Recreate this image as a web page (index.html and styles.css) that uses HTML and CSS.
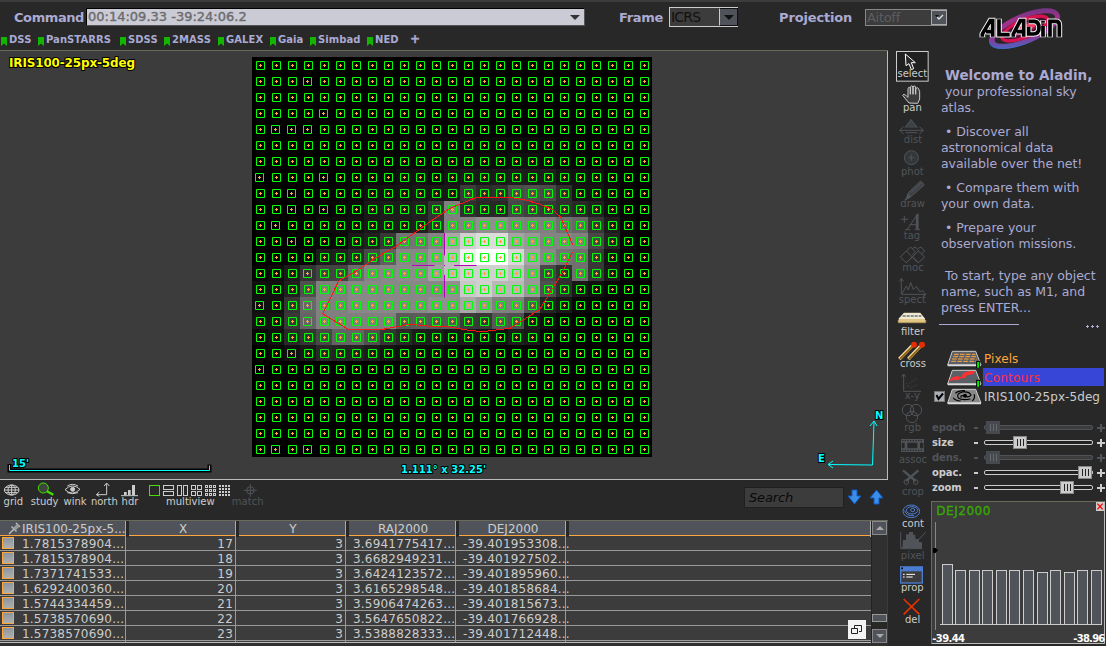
FILE: index.html
```html
<!DOCTYPE html>
<html lang="en">
<head>
<meta charset="utf-8">
<title>Aladin</title>
<link rel="stylesheet" href="styles.css">
</head>
<body>
<header class="top">
  <div class="bars">
    <div class="controls">
      <label class="lbl command-lbl">Command</label>
      <div class="command"><span>00:14:09.33 -39:24:06.2</span><i class="tri"></i></div>
      <label class="lbl frame-lbl">Frame</label>
      <div class="combo frame"><span>ICRS</span><b><i class="tri"></i></b></div>
      <label class="lbl proj-lbl">Projection</label>
      <div class="combo proj"><span>Aitoff</span><b><svg width="9" height="8" viewBox="0 0 9 8"><path d="M0 2h4L2 5z" fill="#111"/><path d="M2 4l2 2L8 2" fill="none" stroke="#e0e0e4" stroke-width="1.300"/></svg></b></div>
    </div>
    <nav class="marks" id="marks"></nav>
  </div>
  <svg class="logo" viewBox="720 15 270 135">
    <defs><linearGradient id="lg" x1="0" y1="1" x2="1" y2="0"><stop offset="0" stop-color="#2a7bd0"/><stop offset=".3" stop-color="#8a3a9c"/><stop offset=".7" stop-color="#a03088"/><stop offset="1" stop-color="#5a3a88"/></linearGradient></defs>
    <g transform="rotate(-23 865 85)" fill="none">
      <ellipse cx="864" cy="87" rx="111" ry="41" stroke="#2670bd" stroke-width="5"/>
      <ellipse cx="866" cy="86" rx="105" ry="37" stroke="url(#lg)" stroke-width="15"/>
      <ellipse cx="866" cy="86" rx="74" ry="25" fill="#401030" stroke="#d8124e" stroke-width="10"/>
      <ellipse cx="866" cy="86" rx="42" ry="13" fill="#f43b64" stroke="#8c1a58" stroke-width="5"/>
    </g>
    <g stroke="#f2f2f2" stroke-linejoin="miter" stroke-linecap="butt" fill="none">
      <path stroke-width="17" d="M739 112V102L763 62H770V112M750 95H770M789 56V104H823M832 112V102L853 62H863V112M842 95H863M878 64H896Q909 66 909 84Q909 102 892 102H878V80M921 112V78M921 70V61M942 112V64H960Q970 64 970 75V112"/>
      <path d="M739 110V102L763 62H770V110M750 95H770M789 58V104H821M832 110V102L853 62H863V110M842 95H863M878 64H896Q909 66 909 84Q909 102 892 102H878V80M921 110V78M921 68V62M942 110V64H960Q970 64 970 75V110" stroke="#000" stroke-width="11"/>
    </g>
  </svg>
</header>
<main class="main">
  <section class="left">
    <svg class="view" id="view" viewBox="0 50 888 430" width="888" height="430"></svg>
    <div class="tools">
      <svg width="28" height="40" viewBox="0 90 84 120"><g class="ln lt"><ellipse cx="35" cy="120" rx="22" ry="15"/><ellipse cx="35" cy="120" rx="11" ry="15"/><path d="M35 105V135M13 120H57M17 112H53M17 128H53"/></g><text x="40" y="165">grid</text></svg>
      <svg width="34" height="40" viewBox="84 90 102 120"><circle cx="130" cy="114" r="15" fill="#3c463c" stroke="#44e000" stroke-width="3"/><path d="M141 124l19 10" stroke="#44e000" stroke-width="7"/><text x="134" y="165">study</text></svg>
      <svg width="27" height="40" viewBox="186 90 81 120"><g class="ln lt"><path d="M195 119Q217 97 240 118Q217 140 195 119M202 108Q217 98 234 108M202 128Q218 134 234 128"/><circle cx="218" cy="118" r="6" fill="#ccc"/></g><text x="225" y="165">wink</text></svg>
      <svg width="31" height="40" viewBox="267 90 93 120"><g class="ln lt"><path d="M290 134H320V101M312 108L320 99L328 108M298 126L289 134L298 139"/></g><text x="313" y="165">north</text></svg>
      <svg width="22" height="40" viewBox="360 90 66 120"><path d="M363 137H414" class="ln lt"/><path d="M372 135v-9h8v9zM384 135v-15h8v15zM396 135v-28h8v28z" class="sol"/><rect x="396" y="105" width="9" height="31" class="sol"/><text x="390" y="165">hdr</text></svg>
      <svg width="90" height="40" viewBox="426 90 270 120" id="multi"><rect x="448.500" y="106.500" width="30" height="30" fill="none" stroke="#44e000" stroke-width="3"/><text x="571" y="165">multiview</text></svg>
      <svg width="36" height="40" viewBox="696 90 108 120"><g class="ln dm"><circle cx="751" cy="121" r="11"/><path d="M751 102V140M732 121H770"/></g><text x="743" y="165" class="dim">match</text></svg>
      <div class="search">Search</div>
      <svg class="arrows" width="36" height="20" viewBox="0 0 36 20"><path d="M5 3h5v6h4l-6.500 8L1 9h4zM27 17h5v-6h4l-6.500-8L23 11h4z" fill="#3a8ee8" stroke="#1259c0"/></svg>
    </div>
    <div class="table">
      <div class="grid" id="grid"></div>
      <div class="scroll"><b><i class="up"></i></b><u></u><em></em><b><i class="down"></i></b></div>
      <div class="detach"><svg width="17" height="17" viewBox="0 0 17 17" fill="none" stroke="#222"><path d="M6.500 7V4.500h7v6H11M3.500 7.500h6v5h-6z"/></svg></div>
    </div>
  </section>
  <aside class="toolcol" id="toolcol"></aside>
  <aside class="right">
    <div class="welcome">
      <p><b>Welcome to Aladin,</b><br>&nbsp;your professional sky<br>atlas.</p>
      <p>&nbsp;• Discover all<br>astronomical data<br>available over the net!</p>
      <p>&nbsp;• Compare them with<br>your own data.</p>
      <p>&nbsp;• Prepare your<br>observation missions.</p>
      <p class="last">&nbsp;To start, type any object<br>name, such as M1, and<br>press ENTER...</p>
    </div>
    <div class="split"><hr><span></span><span></span><span></span></div>
    <div class="layers">
      <div class="layer"><i class="chk none"></i><svg width="36" height="19" viewBox="62 102 108 57"><path d="M81 109H151L167 150H67Z" fill="#5c6066" stroke="#ccc" stroke-width="3"/><path d="M67 151H167" stroke="#ddd" stroke-width="5"/><path d="M86 118H150M84 125H152M80 132H154M78 139H156" stroke="#ffa63d" stroke-width="3" stroke-dasharray="14 4"/><rect x="154" y="139" width="9" height="21" fill="#00ee00" stroke="#000" stroke-width="3"/></svg><span class="orange">Pixels</span></div>
      <div class="layer"><i class="chk none"></i><svg width="36" height="19" viewBox="62 159 108 57"><path d="M81 166H151L167 207H67Z" fill="#5c6066" stroke="#ccc" stroke-width="3"/><path d="M67 208H167" stroke="#ddd" stroke-width="5"/><path d="M68 199L82 187L96 183L108 187L114 174L132 168H148L146 177L125 181L118 190H105L98 195H84Z" fill="#ff3030"/><rect x="154" y="196" width="9" height="21" fill="#00ee00" stroke="#000" stroke-width="3"/></svg><span class="red sel">Contours</span></div>
      <div class="layer"><i class="chk"><svg width="9" height="9" viewBox="0 0 9 9"><path d="M1.500 3L3.500 7L8 1.500" stroke="#000" stroke-width="2" fill="none"/></svg></i><svg width="36" height="19" viewBox="62 216 108 57"><path d="M81 223H151L167 264H67Z" fill="#888" stroke="#ccc" stroke-width="3"/><path d="M67 265H167" stroke="#ddd" stroke-width="5"/><g fill="none" stroke="#000" stroke-width="3.500"><path d="M118 243Q132 249 137 240Q132 229 112 231Q91 236 99 249Q110 257 135 252M118 243Q103 239 108 248M90 235Q100 226 119 227M84 248Q89 257 106 258M146 238Q151 248 141 258"/></g><circle cx="119" cy="242" r="6"/></svg><span>IRIS100-25px-5deg</span></div>
    </div>
    <div class="sliders" id="sliders"></div>
    <div class="hist-panel"><svg width="175" height="144" viewBox="18 18 525 432" id="hist"></svg></div>
  </aside>
</main>
<script src="app.js"></script>
</body>
</html>
```
FILE: styles.css
```css
* { box-sizing: border-box; }
body { margin: 0; width: 1106px; height: 646px; overflow: hidden; background: #282828; color: #ccc; font: 12px "DejaVu Sans", sans-serif; }
svg { display: block; flex: none; }
svg text { font-family: "DejaVu Sans", sans-serif; }
.top { height: 50px; border-top: 2px solid #3c3c3c; display: flex; }
.bars { width: 960px; }
.controls { display: flex; align-items: center; height: 30px; padding-left: 14px; }
.lbl { font-weight: bold; font-size: 13px; color: #aaaad2; flex: none; white-space: nowrap; letter-spacing: -.42px; }
.command-lbl { width: 72px; }
.frame-lbl { width: 50px; margin-left: 34px; letter-spacing: -.3px; }
.proj-lbl { width: 86px; margin-left: 41px; letter-spacing: -.15px; }
.command { width: 499px; height: 18px; border: 1px solid #000; border-right-color: #555; border-bottom-color: #555; background: #cbcbd6; color: #6c6c6e; display: flex; align-items: center; justify-content: space-between; padding: 0 4px 2px 1px; font-size: 13px; -webkit-text-stroke: .4px #6c6c6e; }
.command .tri { margin-top: 2px; }
.tri { border: 5px solid transparent; border-top-color: #333; border-bottom: 0; width: 0; height: 0; }
.combo { height: 20px; width: 69px; display: flex; background: #3c3c3c; font-size: 14px; border: 1px solid #ccc; border-right: 0; color: #111; line-height: 18px; white-space: nowrap; letter-spacing: -.8px; }
.combo span { flex: 1; overflow: hidden; padding-left: 1px; }
.combo b { width: 19px; border: 1px solid #111; border-left-color: #ccc; background: #50545a; display: flex; align-items: center; justify-content: center; }
.combo b .tri { border-top-color: #111; }
.combo.proj { width: 82px; height: 17px; font-size: 13px; color: #5c5c60; line-height: 15px; border-color: #888; letter-spacing: -.3px; }
.combo.proj b { width: 16px; border-color: #aaa; }
.marks { display: flex; height: 16px; line-height: 16px; font-size: 10px; font-weight: bold; color: #aaaad2; }
.mark { display: flex; gap: 2px; padding-left: 1px; flex: none; white-space: nowrap; letter-spacing: .06px; }
.mark svg { margin-top: 5px; }
.plus { font-size: 12px; line-height: 14px; padding-left: 1px; -webkit-text-stroke: .4px #aaaad2; }
.logo { width: 90px; height: 45px; margin-left: 16px; margin-top: 3px; }
.main { display: flex; height: 596px; }
.left { width: 888px; flex: none; }
.view { border: 0; background: #3c3c3c; }
.vb { font-weight: bold; paint-order: stroke; stroke: #000; stroke-width: 2px; stroke-linejoin: round; }
.tools { height: 40px; display: flex; }
.tools text, .toolcol text { font-size: 30px; text-anchor: middle; fill: #ccc; }
.ln { fill: none; stroke-width: 3; }
.lt { stroke: #ccc; }
.dm { stroke: #505459; }
.sol { fill: #ccc; }
.tools .dim, .toolcol .dim { fill: #505459; }
.search { margin: 7px 0 0 476px; width: 100px; height: 21px; background: #3c3c3c; border: 1px solid #202020; font: italic 13px/20px "DejaVu Sans", sans-serif; padding-left: 4px; color: #0a0a0a; letter-spacing: -.15px; }
.arrows { margin: 7px 0 0 3px; }
.table { height: 126px; position: relative; display: flex; background: #3c3c3c; border-top: 1px solid #6b6b5c; border-bottom: 3px solid #303030; }
.grid { width: 871px; height: 122px; overflow: hidden; border-bottom: 1px solid #bbb; }
.row { display: grid; grid-template-columns: 126px 110px 110px 110px 110px 305px; height: 15px; line-height: 16px; letter-spacing: .2px; border-bottom: 1px solid #999; color: #ccc; }
.row span { border-right: 1px solid #999; text-align: right; padding-right: 2px; white-space: nowrap; overflow: hidden; }
.row span:first-child { display: flex; text-align: left; padding: 0 0 0 2px; gap: 8px; }
.row span:nth-child(4), .row span:nth-child(5) { text-align: left; padding: 0 0 0 7px; }
.row span:nth-child(5) { overflow: visible; }
.row span:last-child { border: 0; }
.row i { width: 12px; height: 12px; margin-top: 1px; border: 1px solid #ffa63d; background: linear-gradient(#8b95a0, #b0b0ac); flex: none; }
.row.head { height: 15px; border-bottom: 1px solid #ffa63d; background: #50545a; }
.row.head span, .row.head span:nth-child(4), .row.head span:nth-child(5) { text-align: center; padding: 0 0 0 2px; border-right: 1px solid #aaa; border-left: 3px solid #282828; letter-spacing: 0; line-height: 16px; }
.row.head span:first-child { border-left: 0; padding-left: 8px; gap: 0; overflow: hidden; }
.scroll { width: 16px; display: flex; flex-direction: column; background: #282828; border-left: 1px solid #222; }
.scroll b { height: 14px; border: 1px solid #888; background: #50545a; display: flex; align-items: center; justify-content: center; }
.scroll u { flex: 1; background: #303030; }
.scroll em { height: 8px; background: #50545a; border: 1px solid #999; margin-bottom: 7px; }
.up { border: 4px solid transparent; border-bottom-color: #aaa; border-top: 0; }
.down { border: 4px solid transparent; border-top-color: #aaa; border-bottom: 0; }
.detach { position: absolute; left: 848px; top: 99px; width: 18px; height: 19px; background: #f4f4f4; padding-top: 1px; }
.toolcol { width: 44px; flex: none; height: 596px; }
.right { width: 174px; flex: none; }
.welcome { height: 272px; padding: 17px 0 0 9px; color: #aaaad2; line-height: 16px; font-size: 12.500px; white-space: nowrap; letter-spacing: -.04px; }
.welcome p { margin: 0 0 8px; }
.welcome b { font-size: 13.500px; letter-spacing: .02px; padding-left: 4px; }
.welcome .last { margin-top: 16px; }
.split { display: flex; height: 22px; padding-left: 7px; gap: 2px; }
.split hr { width: 80px; height: 1px; border: 0; background: #aaaad2; margin: 2px 65px 0 0; }
.split span { width: 3px; height: 3px; background: #aaaad2; margin-top: 3px; clip-path: polygon(33% 0, 67% 0, 67% 33%, 100% 33%, 100% 67%, 67% 67%, 67% 100%, 33% 100%, 33% 67%, 0 67%, 0 33%, 33% 33%); }
.layers { padding: 5px 0 0 2px; height: 76px; }
.layer { height: 19px; display: flex; line-height: 20px; }
.layer span { width: 121px; margin-left: 1px; padding-left: 1px; font-size: 12px; white-space: nowrap; letter-spacing: .07px; }
.chk { width: 11px; height: 11px; margin: 4px 1px 0 0; background: #aab0b8; border: 1px solid #777; flex: none; }
.chk.none { visibility: hidden; }
.orange { color: #ffa63d; }
.red { color: #ff3030; }
.layer .sel { background: #3846d8; height: 18px; letter-spacing: .25px; }
.slider { display: flex; height: 15px; align-items: center; font-size: 10px; font-weight: bold; letter-spacing: -.1px; }
.slider span { width: 40px; }
.slider.off { color: #505459; }
.hist-panel { height: 145px; margin: 6px 0 0 -1px; }
```
FILE: app.js
```js
const $ = id => document.getElementById(id);

$('marks').innerHTML = [['DSS', 37], ['PanSTARRS', 82], ['SDSS', 44], ['2MASS', 54], ['GALEX', 52], ['Gaia', 40], ['Simbad', 57], ['NED', 43]]
  .map(([n, w]) => `<span class="mark" style="width:${w}px"><svg width="6" height="9" viewBox="0 0 6 9"><path d="M0 0h6v9L3 6.500 0 9z" fill="#14b400"/></svg>${n}</span>`).join('') + '<span class="plus">+</span>';

/* Pixel brightness of the sky image, one hex byte per cell */
const rows = {
  5: '00 00 00 00 00 00 00 03 04 04 04 06 08 08 08 0a 0a 0a 08 06 04 02 00 00 00',
  6: '00 00 00 00 00 00 02 06 06 08 08 08 0a 0c 0c 0c 10 10 0c 08 06 04 00 00 00',
  7: '00 00 00 00 00 02 06 08 0a 10 12 0c 14 1a 18 1a 1e 1c 1e 14 12 10 08 04 00',
  8: '00 00 00 00 00 04 08 10 12 14 18 18 18 3c 2c 30 4c 50 4a 30 14 14 0c 04 00',
  9: '00 00 00 00 04 08 0c 18 1c 1c 20 34 80 30 28 28 48 40 38 30 28 20 10 04 00',
  10: '00 00 00 00 0a 0c 10 18 1c 1c 20 34 80 84 90 90 84 80 80 70 68 38 1c 08 00',
  11: '00 00 02 04 06 0a 1a 20 38 74 74 84 a8 d0 dc dc a4 98 84 84 80 48 24 08 00',
  12: '00 00 04 08 1c 20 2c 48 60 88 88 98 bc f0 ff ff d8 a4 88 74 70 38 14 04 00',
  13: '06 0c 1a 34 44 44 6c 84 88 8c 8c a0 bc d0 d0 d0 c0 98 48 30 70 38 18 04 00',
  14: '10 10 20 50 80 80 88 88 88 88 88 88 90 c8 d0 b8 b8 98 50 30 18 10 08 02 00',
  15: '10 10 34 68 80 80 88 88 88 88 88 90 90 a8 98 80 80 58 24 18 08 08 04 00 00',
  16: '14 14 38 64 80 80 80 80 80 5a 5c 58 58 3c 38 58 50 1c 10 08 04 02 00 00 00',
  17: '08 10 28 34 48 64 64 50 34 28 1c 1c 14 18 14 10 1c 18 08 04 00 00 00 00 00',
  18: '00 08 10 18 28 24 24 1c 14 10 0c 0c 08 06 04 04 04 04 02 00 00 00 00 00 00'
};
const shifted = '1.3 3.4 4.1 4.2 4.3 7.0 7.4 8.2 9.2 9.4 10.1 11.2 13.3 15.0 15.3 16.3 18.2 19.0 24.1 24.3'.split(' ');
let cells = '', marks = '', pluses = '';
for (let r = 0; r < 25; r++) {
  const v = rows[r] ? rows[r].split(' ') : null;
  for (let c = 0; c < 25; c++) {
    const x = 252 + c * 16, y = 57 + r * 16;
    if (v && v[c] !== '00') cells += `<rect x="${x}" y="${y}" width="16" height="16" fill="#${v[c]}${v[c]}${v[c]}"/>`;
    const m = x + (shifted.includes(r + '.' + c) ? 3.5 : 4.5);
    marks += `M${m} ${y + 4.5}h8v8h-8z`;
    pluses += `M${m + 2.5} ${y + 8.5}h3M${m + 4} ${y + 7}v3`;
  }
}
$('view').innerHTML = `
<path d="M0 50.500H888" stroke="#6b6b5c"/><path d="M887.500 51V480M0 479.500H888" stroke="#bbb"/>
<rect x="252" y="57" width="400" height="400"/><g shape-rendering="crispEdges">${cells}</g>
<path d="M444.500 233v22.500M444.500 275v22.500M412 265.500h22.500M454 265.500h22.500M444 265.500h1" stroke="#b400b4"/>
<path d="${marks}" fill="none" stroke="#00ff00"/><path d="${pluses}" stroke="#ffa63d"/>
<path d="M572.700 244.700L560.700 217.300L553 210L540 204L525 200L510 197.300H476.700L450 208.300L430 221.700L413 234L395 247L376.700 257.300L356.700 270.700L338.700 281L322.700 314L348.300 329.300H383L410 324.300L431 326.300L447 326.700L466.700 330L482 331.700L510 328.300L540 309.300L561.700 273.300L572.700 251.700" fill="none" stroke="#ff1414" shape-rendering="crispEdges"/>
<text x="9" y="67" class="vb" font-size="12" fill="#ff0" textLength="126">IRIS100-25px-5deg</text>
<g fill="none"><path d="M9.500 464v6.500H209.500v-6" stroke="#000" stroke-width="4"/><path d="M9.500 465v5.500H209.500v-5" stroke="#0ff"/></g>
<g fill="#0ff" font-size="10"><text x="12" y="467" class="vb">15'</text><text x="401" y="473" class="vb" textLength="85">1.111° x 32.25'</text>
<text x="875" y="419" class="vb">N</text><text x="818" y="462" class="vb">E</text></g>
<path d="M874 422L872.500 465L829 464.500M870 426L874 421L877 426M833 461L828 464.500L833 468" fill="none" stroke="#0ff"/>`;

/* Multiview layout pickers */
const box = (x, y, w, h) => `<rect x="${x + 1.5}" y="${y + 1.5}" width="${w - 3}" height="${h - 3}" class="ln lt"/>`;
let g = box(489, 105, 33, 15) + box(489, 123, 33, 15) + box(531, 105, 15, 33) + box(549, 105, 15, 33);
for (let i = 0; i < 4; i++) g += box(573 + (i % 2) * 18, 105 + (i >> 1) * 18, 15, 15);
for (let i = 0; i < 9; i++) g += box(615 + (i % 3) * 12, 105 + Math.floor(i / 3) * 12, 9, 9);
for (let i = 0; i < 16; i++) g += `<rect x="${657 + (i % 4) * 9}" y="${105 + (i >> 2) * 9}" width="6" height="6" class="sol"/>`;
$('multi').innerHTML += g;

const pin = '<svg width="14" height="14" viewBox="0 0 14 14"><path d="M1 13l5-5M3.500 5.500l5 5M8 2l4 4" stroke="#bbb" stroke-width="1.500"/><path d="M5 7l4-4 2.500 2.500-4 4z" fill="#999"/></svg>';
const data = [['1.7815378904', 17, '3.6941775417', '-39.401953308'], ['1.7815378904', 18, '3.6682949231', '-39.401927502'], ['1.7371741533', 19, '3.6424123572', '-39.401895960'], ['1.6292400360', 20, '3.6165298548', '-39.401858684'], ['1.5744334459', 21, '3.5906474263', '-39.401815673'], ['1.5738570690', 22, '3.5647650822', '-39.401766928'], ['1.5738570690', 23, '3.5388828333', '-39.401712448']];
$('grid').innerHTML = `<div class="row head"><span>${pin}IRIS100-25px-5...</span><span>X</span><span>Y</span><span>RAJ2000</span><span>DEJ2000</span><span></span></div>` +
  data.map(d => `<div class="row"><span><i></i>${d[0]}...</span><span>${d[1]}</span><span>3</span><span>${d[2]}...</span><span>${d[3]}...</span><span></span></div>`).join('') +
  '<div class="row"><span><i></i></span><span></span><span></span><span></span><span></span><span></span></div>';

/* Tool palette: name, enabled, label x, drawing */
const L = (d, x = '') => `<path class="ln lt" d="${d}" ${x}/>`;
const D = (d, x = '') => `<path class="ln dm" d="${d}" ${x}/>`;
const tools = [
  ['select', 1, 82, `<rect x="34.500" y="19.500" width="95" height="89" fill="#202020" stroke="#ccc" stroke-width="3"/><path d="M61 27L63 62L72 56L79 74L86 71L79 53L91 53Z" fill="#282828" stroke="#fff" stroke-width="3"/>`],
  ['pan', 1, 82, L('M72 174L53 151Q55 145 65 153L69 157V130Q72 124 76 130V148V126Q80 118 84 126V148V125Q89 119 92 126V148V131Q98 124 101 132L104 140V162L98 175Z', 'style="fill:#3c3c3c"')],
  ['dist', 0, 84, `<path d="M78 222L98 248H60Z" fill="#3e4247"/>` + D('M44 256H115M56 245L44 256L56 267M103 245L115 256L103 267M60 247L78 224L97 247M62 263H97')],
  ['phot', 0, 82, `<circle class="ln dm" cx="79" cy="338" r="21" style="fill:#34373a"/>` + D('M79 329V347M70 338H88')],
  ['draw', 0, 83, D('M63 463L71 442L107 408L118 419L83 451ZM78 442L111 412M65 456L70 462', 'style="fill:#3e4247"') + D('M62 464L69 448L78 455Z', 'style="fill:#505459"')],
  ['tag', 0, 81, D('M48 523H69M58 513V533M66 554L99 506V554M74 539H97M60 554H76M90 554H105') + D('M96 508V552', 'style="stroke-width:7"')],
  ['moc', 0, 84, D('M46 636L64 618L82 636L64 653ZM82 636L100 618L119 636L100 653ZM64 618L77 606L91 621L82 630M82 611L91 606L102 618M100 610L108 606L119 618L109 627M64 653L82 636L100 653')],
  ['spect', 0, 82, D('M49 703V748H122M43 709L49 700L55 709M115 741L123 748L115 754M51 746L64 723L70 735L77 712L85 734L94 724L104 740L116 737')],
  ['filter', 1, 83, `<path d="M57 803H106L120 822V832H41V822Z" fill="#e2c684"/><path d="M57 804H105L121 822H40Z" fill="#eeead8"/><path d="M53 813H109" stroke="#333" stroke-width="3" stroke-dasharray="9 3"/><path d="M40 825V833H122V825" fill="none" stroke="#c7a864" stroke-width="3"/>`],
  ['cross', 1, 84, `<path d="M43 57L82 17M70 57L108 17" stroke="#eedda8" stroke-width="10"/><path d="M45 57L82 20M72 57L108 20" stroke="#94600c" stroke-width="6"/><circle cx="87" cy="14" r="9" fill="#e62c00"/><circle cx="111" cy="14" r="9" fill="#e62c00"/>`],
  ['x-y', 0, 82, D('M56 103V154H108M50 110L56 102L62 110') + D('M62 143L82 123L98 113', 'stroke-dasharray="3 5"') + D('M64 130L76 145L96 134', 'stroke-dasharray="3 7"')],
  ['rgb', 0, 83, D('M52 210a17 17 0 1 0 34 0a17 17 0 1 0 -34 0M76 210a17 17 0 1 0 34 0a17 17 0 1 0 -34 0M64 231a17 17 0 1 0 34 0a17 17 0 1 0 -34 0')],
  ['assoc', 0, 84, `<path d="M48 297H117V336H48Z" fill="#505459"/><path d="M51 302H115M51 331H115" stroke="#282828" stroke-width="4" stroke-dasharray="4 4"/><path d="M50 308h9v17h-9zM67 308h30v17H67zM105 308h10v17h-10z" fill="#282828"/>`],
  ['crop', 0, 84, D('M54 391L92 423M100 391L63 423', 'style="stroke-width:7"') + `<circle class="ln dm" cx="64" cy="426" r="7"/><circle class="ln dm" cx="92" cy="426" r="7"/>`],
  ['cont', 1, 84, `<g fill="none" stroke="#4c7cd2" stroke-width="3"><ellipse cx="79" cy="514" rx="25" ry="19"/><ellipse cx="81" cy="511" rx="17" ry="11"/><ellipse cx="83" cy="510" rx="6" ry="5"/><path d="M59 512Q64 529 87 527"/></g>`],
  ['pixel', 0, 83, `<path d="M52 625L54 600H63V583H72V576H84V584H91V597H102V607H111V625Z" fill="#505459"/>` + D('M47 577V626H112M48 625Q98 610 122 576')],
  ['prop', 1, 82, `<rect x="47" y="681" width="65" height="48" fill="#3c3c3c" stroke="#4c7cd2" stroke-width="4"/><path d="M45 680H114V694H45Z" fill="#4c7cd2"/><path d="M49 685H54" stroke="#000" stroke-width="5"/><path d="M54 703H59M64 703H90M54 711H59M64 711H83" stroke="#fff" stroke-width="3"/>`],
  ['del', 1, 83, `<path d="M56 777L103 823M103 777L56 823" stroke="#e63200" stroke-width="5"/>`]
];
$('toolcol').innerHTML = tools.map(([n, on, x, art], k) => {
  const y = k < 9 ? 15 + 96 * k : 96 * k - 870;
  return `<svg width="44" height="32" viewBox="9 ${y} 132 96" overflow="visible">${art}<text x="${x}" y="${y + (n === 'select' ? 81 : 87)}" class="${on ? '' : 'dim'}">${n}</text></svg>`;
}).join('');

$('sliders').innerHTML = [['epoch', 1, 0], ['size', 28, 1], ['dens.', 1, 0], ['opac.', 93, 1], ['zoom', 75, 1]].map(([n, p, on]) => {
  const c = on ? '#ccc' : '#505459', k = on ? '#ccc' : '#46494d', i = on ? '#222' : '#666a70';
  return `<div class="slider ${on ? '' : 'off'}"><span>${n}</span><svg width="134" height="15" viewBox="0 0 134 15"><path d="M2 8h4M125 8h8M129 4v8" stroke="${c}" stroke-width="2"/><rect x="12.500" y="5.500" width="108" height="4" rx="1.500" fill="${on ? '#222' : '#3c3c3c'}" stroke="${c}"/><rect x="${p + 13.500}" y="1.500" width="13" height="12" fill="${k}" stroke="${on ? '#888' : '#46494d'}"/><path d="M${p + 17.500} 4v7M${p + 20.500} 4v7M${p + 23.500} 4v7" stroke="${i}"/></svg></div>`;
}).join('');

const bars = [[51, 208], [90, 226], [132, 226], [171, 226], [213, 226], [252, 226], [294, 226], [336, 232], [375, 226], [417, 232], [456, 226], [498, 226]];
$('hist').innerHTML = `<rect x="19.500" y="19.500" width="519" height="426" fill="#3c3c3c" stroke="#6b6b5c" stroke-width="3"/><path d="M538.500 20V445.500H20" fill="none" stroke="#bbb" stroke-width="3"/>
<text x="34" y="60" font-size="36" fill="#38a800" stroke="#38a800" stroke-width="1" textLength="162">DEJ2000</text>
<rect x="513" y="21" width="24" height="27" fill="#ccc"/><path d="M517 26L533 43M533 26L517 43" stroke="#f00" stroke-width="4"/>
<path d="M31.500 81V405" stroke="#888" stroke-width="3"/><path d="M24 159H32L39 166L32 174H24Z"/>` +
  bars.map(([x, y]) => `<rect x="${x + 1.5}" y="${y + 0.5}" width="30" height="${388 - y}" fill="#50545a" stroke="#ccc" stroke-width="3"/>`).join('') +
  `<path d="M45 388.500H531" stroke="#ccc" stroke-width="3"/><g font-size="30" font-weight="bold" fill="#fff"><text x="22" y="441" textLength="98">-39.44</text><text x="445" y="441" textLength="96">-38.96</text></g>`;
```
